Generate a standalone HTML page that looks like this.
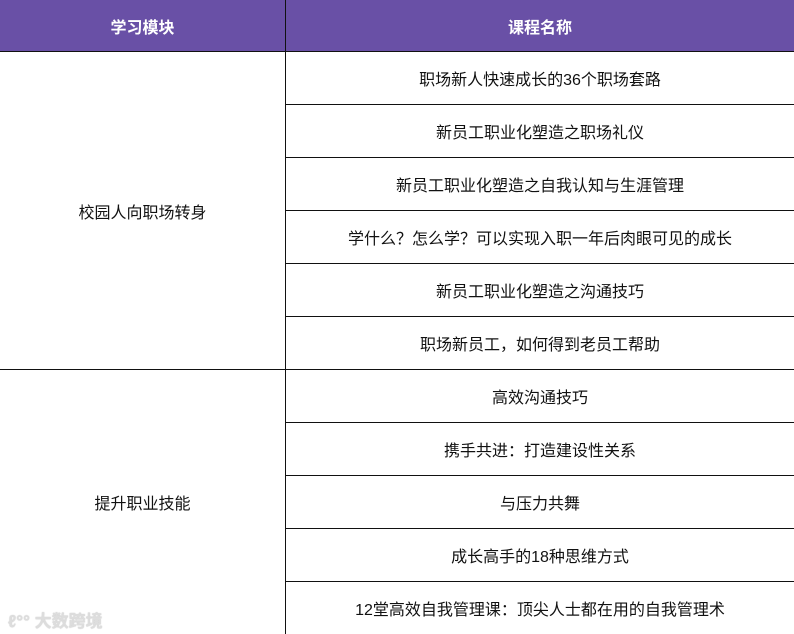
<!DOCTYPE html>
<html><head><meta charset="utf-8"><style>
body{margin:0;width:794px;height:634px;overflow:hidden;background:#fff;font-family:"Liberation Sans","Noto Sans CJK SC",sans-serif;font-size:16px;color:#111;position:relative}
.h{position:absolute;top:0;height:51px;background:#6950a6;color:#fff;font-weight:bold;display:flex;align-items:center;justify-content:center;font-size:16px}
.c{position:absolute;left:286px;width:508px;height:52px;display:flex;align-items:center;justify-content:center;border-bottom:1px solid #111}
.l{position:absolute;left:0;width:285px;display:flex;align-items:center;justify-content:center}
.v{position:absolute;left:285px;top:0;width:1px;height:634px;background:#111}
.hl{position:absolute;left:0;width:794px;height:1px;background:#111}
.wm{position:absolute;left:8px;top:607px;color:#ddd;font-size:17px;font-weight:bold;text-shadow:0 0 1px #bbb}
</style></head><body>
<div class="h" style="left:0;width:285px">学习模块</div>
<div class="h" style="left:286px;width:508px">课程名称</div>
<div class="hl" style="top:51px"></div>
<div class="l" style="top:52px;height:317px">校园人向职场转身</div>
<div class="hl" style="top:369px;width:286px"></div>
<div class="l" style="top:370px;height:264px">提升职业技能</div>
<div class="c" style="top:52px">职场新人快速成长的36个职场套路</div>
<div class="c" style="top:105px">新员工职业化塑造之职场礼仪</div>
<div class="c" style="top:158px">新员工职业化塑造之自我认知与生涯管理</div>
<div class="c" style="top:211px">学什么？怎么学？可以实现入职一年后肉眼可见的成长</div>
<div class="c" style="top:264px">新员工职业化塑造之沟通技巧</div>
<div class="c" style="top:317px">职场新员工，如何得到老员工帮助</div>
<div class="c" style="top:370px">高效沟通技巧</div>
<div class="c" style="top:423px">携手共进：打造建设性关系</div>
<div class="c" style="top:476px">与压力共舞</div>
<div class="c" style="top:529px">成长高手的18种思维方式</div>
<div class="c" style="top:582px;border-bottom:none">12堂高效自我管理课：顶尖人士都在用的自我管理术</div>
<div class="v"></div>
<div class="wm">ℓ°° 大数跨境</div>
</body></html>
